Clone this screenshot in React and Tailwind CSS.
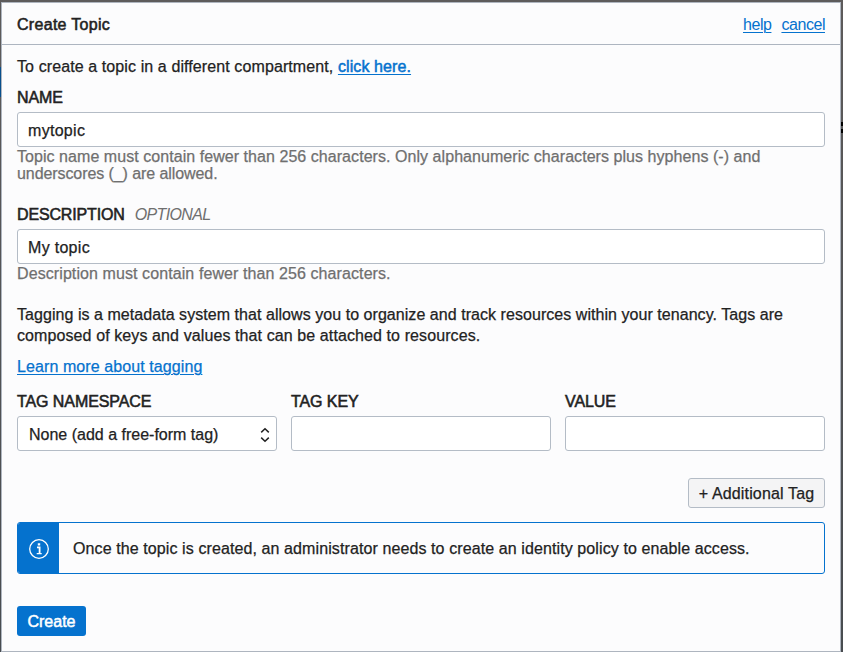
const link = "text-[#0572ce] underline underline-offset-[2px] decoration-1";
const label = "flex h-[17px] items-center whitespace-nowrap font-medium leading-[17px] tracking-[-0.08px] [-webkit-text-stroke:0.55px_#222]";
const field = "mt-[6px] block h-[35px] w-full rounded-[3px] border border-[#b4bcc6] bg-white px-[10px] pt-[2px] tracking-[0.3px] text-[#222] outline-none";

function Label({ children, className = "" }) {
  return <div className={`${label} ${className}`}>{children}</div>;
}

export default function App() {
  return (
    <div className="relative h-[652px] w-[843px] overflow-hidden bg-gradient-to-b from-[#5d5b5b] to-[#484c50] pl-px pt-[2px] font-['Liberation_Sans',Arial,sans-serif] text-[16px] text-[#222] [-webkit-text-stroke:0.25px]">
      <div className="absolute left-0 top-[67px] h-[30px] w-px bg-[#084f8c]" />
      <div className="absolute right-0 top-[122px] h-[4px] w-[2px] bg-black" />
      <div className="absolute right-0 top-[129px] h-[4px] w-[2px] bg-black" />

      <div className="h-[650px] w-[840px] border border-[#aeb5bf] bg-[#fcfcfd]">
        <header className="flex h-[42px] items-center justify-between border-b border-[#adb5c0] px-[15px] pt-[2px]">
          <h1 className="whitespace-nowrap text-[16px] tracking-[0.3px] [-webkit-text-stroke:0.55px_#222]">Create Topic</h1>
          <div className="flex gap-[10px] [-webkit-text-stroke:0px]">
            <a className={`${link} tracking-[-0.45px]`}>help</a>
            <a className={`${link} tracking-[-0.45px]`}>cancel</a>
          </div>
        </header>

        <main className="px-[15px] pt-[12px]">
          <p className="h-[20px] whitespace-nowrap leading-[20px] tracking-[0.1px]">
            To create a topic in a different compartment, <a className={`${link} [-webkit-text-stroke:0.5px_#0572ce]`}>click here.</a>
          </p>

          <Label className="mt-[12px]">NAME</Label>
          <input className={field} defaultValue="mytopic" />
          <p className="mt-px whitespace-nowrap leading-[17px] tracking-[0.053px] text-[#6f6f6f]">
            Topic name must contain fewer than 256 characters. Only alphanumeric characters plus hyphens (-) and
            <br />
            <span className="tracking-[-0.08px]">underscores (_) are allowed.</span>
          </p>

          <Label className="mt-[24px]">
            <span className="tracking-[-0.15px]">DESCRIPTION</span>
            <i className="ml-[10px] font-normal tracking-[-0.63px] text-[#6f6f6f] [-webkit-text-stroke:0px]">OPTIONAL</i>
          </Label>
          <input className={field} defaultValue="My topic" />
          <p className="mt-px whitespace-nowrap leading-[17px] tracking-[0.09px] text-[#6f6f6f]">
            Description must contain fewer than 256 characters.
          </p>

          <p className="mt-[22px] whitespace-nowrap leading-[21px] tracking-[0.05px]">
            Tagging is a metadata system that allows you to organize and track resources within your tenancy. Tags are
            <br />
            <span className="tracking-[0.1px]">composed of keys and values that can be attached to resources.</span>
          </p>
          <p className="mt-[10px] h-[21px] whitespace-nowrap leading-[21px]">
            <a className={`${link} tracking-[0.09px]`}>Learn more about tagging</a>
          </p>

          <div className="mt-[16px] grid grid-cols-3 gap-[14px]">
            <div>
              <Label>TAG NAMESPACE</Label>
              <div className="mt-[6px] flex h-[35px] items-center justify-between rounded-[3px] border border-[#b4bcc6] bg-white pl-[11px] pr-[6px] pt-[2px]">
                <span className="whitespace-nowrap">None (add a free-form tag)</span>
                <svg width="10" height="16" viewBox="0 0 10 16" fill="none" stroke="#222" strokeWidth="1.5">
                  <path d="M1.2 5.4 5 1.8l3.8 3.6M1.2 10.6 5 14.2l3.8-3.6" />
                </svg>
              </div>
            </div>
            <div>
              <Label>TAG KEY</Label>
              <input className={field} />
            </div>
            <div>
              <Label>VALUE</Label>
              <input className={field} />
            </div>
          </div>

          <div className="mt-[27px] flex justify-end">
            <button className="h-[30px] w-[137px] whitespace-nowrap rounded-[3px] border border-[#b4bcc6] bg-[#f4f4f5] pt-[2px] tracking-[0.15px]">+ Additional Tag</button>
          </div>

          <div className="mt-[14px] flex h-[52px] overflow-hidden rounded-[3px] border border-[#0572ce]">
            <div className="flex w-[41px] items-center justify-center bg-[#0572ce] pt-[2px]">
              <svg width="22" height="22" viewBox="0 0 22 22" fill="none" stroke="white">
                <circle cx="11" cy="11" r="9.3" strokeWidth="1.3" />
                <path d="M11 5.3v2.3" strokeWidth="2.4" />
                <path d="M9 9.3h2.6V15.2" strokeWidth="1.8" />
                <path d="M8.7 15.6h5" strokeWidth="1.3" />
              </svg>
            </div>
            <p className="flex items-center whitespace-nowrap pl-[14px] pt-[2px] tracking-[0.1px]">
              Once the topic is created, an administrator needs to create an identity policy to enable access.
            </p>
          </div>

          <button className="mt-[32px] block h-[30px] w-[69px] rounded-[3px] bg-[#0572ce] pt-[2px] text-white [-webkit-text-stroke:0.5px_white]">Create</button>
        </main>
      </div>
    </div>
  );
}
